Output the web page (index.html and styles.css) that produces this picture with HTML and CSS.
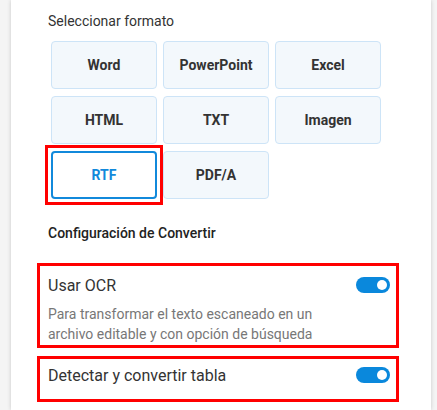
FILE: index.html
```html
<!DOCTYPE html>
<html lang="es">
<head>
    <meta charset="UTF-8">
    <meta name="viewport" content="width=device-width, initial-scale=1.0">
    <title>Convertir</title>
    <link rel="stylesheet" href="styles.css">
</head>
<body>
    <div class="panel">
        <h3 class="section-title">Seleccionar formato</h3>
        <div class="format-grid">
            <button class="format-btn">Word</button>
            <button class="format-btn">PowerPoint</button>
            <button class="format-btn">Excel</button>
            <button class="format-btn">HTML</button>
            <button class="format-btn">TXT</button>
            <button class="format-btn">Imagen</button>
            <button class="format-btn active marked">RTF</button>
            <button class="format-btn">PDF/A</button>
        </div>

        <h3 class="section-title settings-title">Configuración de Convertir</h3>

        <div class="option option-ocr highlight">
            <div class="option-row">
                <span class="option-label">Usar OCR</span>
                <span class="toggle on"></span>
            </div>
            <p class="option-desc">Para transformar el texto escaneado en un archivo editable y con opción de búsqueda</p>
        </div>

        <div class="option option-table highlight">
            <div class="option-row">
                <span class="option-label">Detectar y convertir tabla</span>
                <span class="toggle on"></span>
            </div>
        </div>
    </div>
</body>
</html>
```

FILE: styles.css
```css
body {
    margin: 0;
    height: 410px;
    overflow: hidden;
    background: #f4f4f4;
    font-family: Roboto, 'Liberation Sans', sans-serif;
    color: #333;
}

.panel {
    margin-left: 11px;
    width: 420px;
    height: 410px;
    box-sizing: border-box;
    padding: 11px 35px 0 29px;
    background: #fff;
    box-shadow: 0 0 4px rgba(0, 0, 0, 0.18);
}

.section-title {
    margin: 0 0 0 8px;
    font-size: 14px;
    font-weight: 400;
    line-height: 20px;
    color: #333;
}

.settings-title {
    margin-top: 24px;
    font-weight: 500;
    color: #222;
}

.format-grid {
    display: grid;
    grid-template-columns: repeat(3, 106px);
    grid-auto-rows: 48px;
    column-gap: 6px;
    row-gap: 7px;
    margin: 10px 0 0 11px;
}

.format-btn {
    position: relative;
    border: 1px solid #cde4f7;
    border-radius: 4px;
    background: #f3f8fc;
    font-family: inherit;
    font-size: 14px;
    font-weight: 700;
    color: #333;
    cursor: pointer;
    padding: 0;
}

.format-btn.active {
    border: 2px solid #1189db;
    background: #fff;
    color: #1189db;
}

/* red annotation boxes */
.highlight {
    outline: 3px solid #f00;
}

.marked::before {
    content: '';
    position: absolute;
    top: -8px;
    left: -8px;
    right: -8px;
    bottom: -8px;
    border: 3px solid #f00;
}

.option {
    box-sizing: border-box;
    padding: 8px 6px 0 8px;
}

.option-ocr {
    margin-top: 23px;
    height: 79px;
}

.option-table {
    margin-top: 14px;
    height: 40px;
    padding-top: 5px;
}

.option-row {
    display: flex;
    justify-content: space-between;
    align-items: center;
    height: 22px;
}

.option-label {
    font-size: 16px;
    color: #333;
}

.option-desc {
    margin: 8px 0 0;
    font-size: 14px;
    line-height: 20px;
    color: #777;
    max-width: 296px;
}

.toggle {
    position: relative;
    width: 34px;
    height: 16px;
    border-radius: 8px;
    background: #ccc;
}

.toggle.on {
    background: #0a88dc;
}

.toggle::after {
    content: '';
    position: absolute;
    top: 3px;
    left: 3px;
    width: 10px;
    height: 10px;
    border-radius: 50%;
    background: #fff;
}

.toggle.on::after {
    left: 21px;
}
```
